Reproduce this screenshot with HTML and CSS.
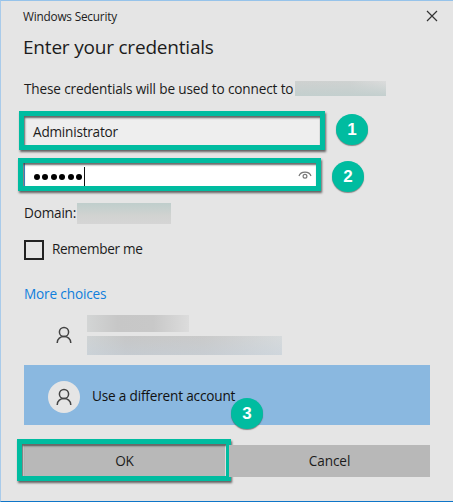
FILE: index.html
```html
<!DOCTYPE html>
<html lang="en">
<head>
<meta charset="utf-8">
<title>Windows Security</title>
<link rel="stylesheet" href="styles.css">
</head>
<body>
<main class="dialog">
  <header class="titlebar">
    <span class="caption">Windows Security</span>
    <svg class="close" width="12" height="12" viewBox="0 0 12 12"><path d="M1 1l10 10M11 1L1 11"/></svg>
  </header>
  <h1 class="heading"><span>Enter your credentials</span></h1>
  <p class="message"><span>These credentials will be used to connect to</span><i class="redacted host"></i></p>
  <div class="field user"><span>Administrator</span>
    <b class="frame frame-user"></b><b class="badge badge-1">1</b>
  </div>
  <div class="field password">
    <span class="dots"><i></i><i></i><i></i><i></i><i></i><i></i></span><span class="caret"></span>
    <svg class="eye" width="14" height="11" viewBox="0 0 14 11"><path d="M1 6C2.6 .7 11.4 .7 13 6"/><circle cx="7" cy="6.2" r="1.9"/></svg>
    <b class="frame frame-password"></b><b class="badge badge-2">2</b>
  </div>
  <div class="domain"><span>Domain:</span><i class="redacted domain-name"></i></div>
  <label class="remember"><i class="checkbox"></i><span>Remember me</span></label>
  <a class="more"><span>More choices</span></a>
  <section class="accounts">
    <div class="account">
      <span class="avatar"><svg width="16" height="18" viewBox="0 0 16 18"><circle cx="8" cy="6" r="4.6"/><path d="M1.2 17C1.2 8.4 14.8 8.4 14.8 17"/></svg></span>
      <div class="identity"><i class="redacted name"></i><i class="redacted address"></i></div>
    </div>
    <div class="account selected">
      <span class="avatar"><svg width="16" height="18" viewBox="0 0 16 18"><circle cx="8" cy="6" r="4.6"/><path d="M1.2 17C1.2 8.4 14.8 8.4 14.8 17"/></svg></span>
      <span class="different">Use a different account</span>
      <b class="badge badge-3">3</b>
    </div>
  </section>
  <footer class="actions">
    <div class="button ok"><span>OK</span><b class="frame frame-ok"></b></div>
    <div class="button cancel"><span>Cancel</span></div>
  </footer>
</main>
</body>
</html>
```
FILE: styles.css
```css
* { box-sizing: border-box; }
body { margin: 0; }
.dialog {
  width: 453px;
  height: 502px;
  padding: 0 23px 0 23px;
  border: solid;
  border-width: 1px 0 1px 1px;
  border-color: #96c3ea #e5e5e5 #0f75c8 #a9cbea;
  background: #e5e5e5;
  color: #1c1c1c;
  font: 13.6px/26px "Open Sans", "Noto Sans", sans-serif;
  white-space: nowrap;
}
.titlebar { display: flex; height: 31px; align-items: center; justify-content: space-between; margin: 0 -8px 0 -1px; }
.caption { margin-top: -2px; font-size: 11.8px; letter-spacing: -0.2px; }
.close { margin-top: -1px; fill: none; stroke: #333; stroke-width: 1.2; }
.heading { height: 30px; margin: 0 0 0 -1px; font-size: 19px; font-weight: 400; line-height: 30px; letter-spacing: -0.2px; }
.message { display: flex; height: 26px; margin: 14px 0; letter-spacing: -0.15px; }
.redacted { display: block; }
.message span { width: 271px; }
.host { width: 91px; height: 15px; margin-top: 5px; background: linear-gradient(0deg, #c3cfce, #c3cfce00), linear-gradient(90deg, #cfd1d0, #cfd2d1 60%, #dcdcdc); }
.field { position: relative; display: flex; align-items: center; }
.user { width: 295px; height: 29px; padding: 3px 0 0 9px; background: #eee; letter-spacing: -0.22px; }
.password { width: 292px; height: 23px; margin-top: 18px; padding-left: 9px; border-left: 1px solid #3c8fdd; background: #fff; }
.dots { display: flex; gap: 2.4px; margin-top: 5px; }
.dots i { width: 6px; height: 6px; border-radius: 50%; background: #000; }
.caret { width: 1px; height: 19px; margin: 4px 0 0 2px; background: #111; }
.eye { margin: 2px 4px 0 auto; fill: none; stroke: #777; stroke-width: 1.2; }
.frame { position: absolute; border: 5px solid #00bca0; box-shadow: 1px 2px 2px #333b, inset 1px 2px 2px #333b; }
.frame-user { left: -5px; top: -5px; width: 306px; height: 39px; }
.frame-password { left: -7px; top: -5px; width: 303px; height: 33px; }
.frame-ok { left: -7px; top: -6px; width: 214px; height: 42px; }
.badge {
  position: absolute;
  width: 32px;
  height: 31px;
  border-radius: 50%;
  background: #00bca0;
  box-shadow: 0 1px 1px #3338;
  color: #fff;
  font: bold 17px/32px "Liberation Sans", sans-serif;
  letter-spacing: 0;
  text-align: center;
}
.badge-1 { left: 312px; top: -2px; }
.badge-2 { left: 307px; top: -2px; }
.badge-3 { left: 207px; top: 33px; }
.domain { display: flex; height: 26px; margin-top: 14px; letter-spacing: -0.2px; }
.domain-name { width: 94px; height: 21px; margin: 3px 0 0 1px; background: linear-gradient(180deg, #bfcecc, #d1d3d1 60%, #d5d5d5); }
.remember { display: flex; height: 26px; align-items: center; gap: 8px; margin-top: 10px; letter-spacing: -0.33px; }
.checkbox { width: 20px; height: 20px; margin-top: 2px; border: 2px solid #222; }
.more { display: block; height: 26px; margin-top: 19px; color: #107fdc; letter-spacing: -0.15px; }
.account { position: relative; display: flex; width: 406px; align-items: center; height: 58px; padding-left: 24px; }
.avatar { display: flex; width: 32px; height: 32px; margin-top: -2px; align-items: center; justify-content: center; border-radius: 50%; }
.avatar svg { fill: none; stroke: #444; stroke-width: 1.5; }
.identity { display: flex; flex-direction: column; gap: 4px; margin: -2px 0 0 7px; }
.name { width: 102px; height: 17px; background: linear-gradient(90deg, #d3d5d5, #c7c7c7 30%, #c8c8c8 65%, #dcdcdc); }
.address { width: 195px; height: 19px; background: linear-gradient(180deg, #cdcfcf33, #c6d0da88), linear-gradient(90deg, #d0d4d5, #c5c5c5 20%, #c9c9c9 60%, #d9dddf); }
.selected { height: 60px; background: #8ab8e0; color: #111; }
.selected .avatar { margin-top: 4px; background: #e5e5e5; }
.different { margin: 1px 0 0 12px; letter-spacing: -0.18px; }
.actions { display: flex; gap: 4px; margin-top: 20px; }
.button { position: relative; width: 201px; height: 32px; background: #b8b8b8; line-height: 32px; text-align: center; letter-spacing: -0.1px; }
```
